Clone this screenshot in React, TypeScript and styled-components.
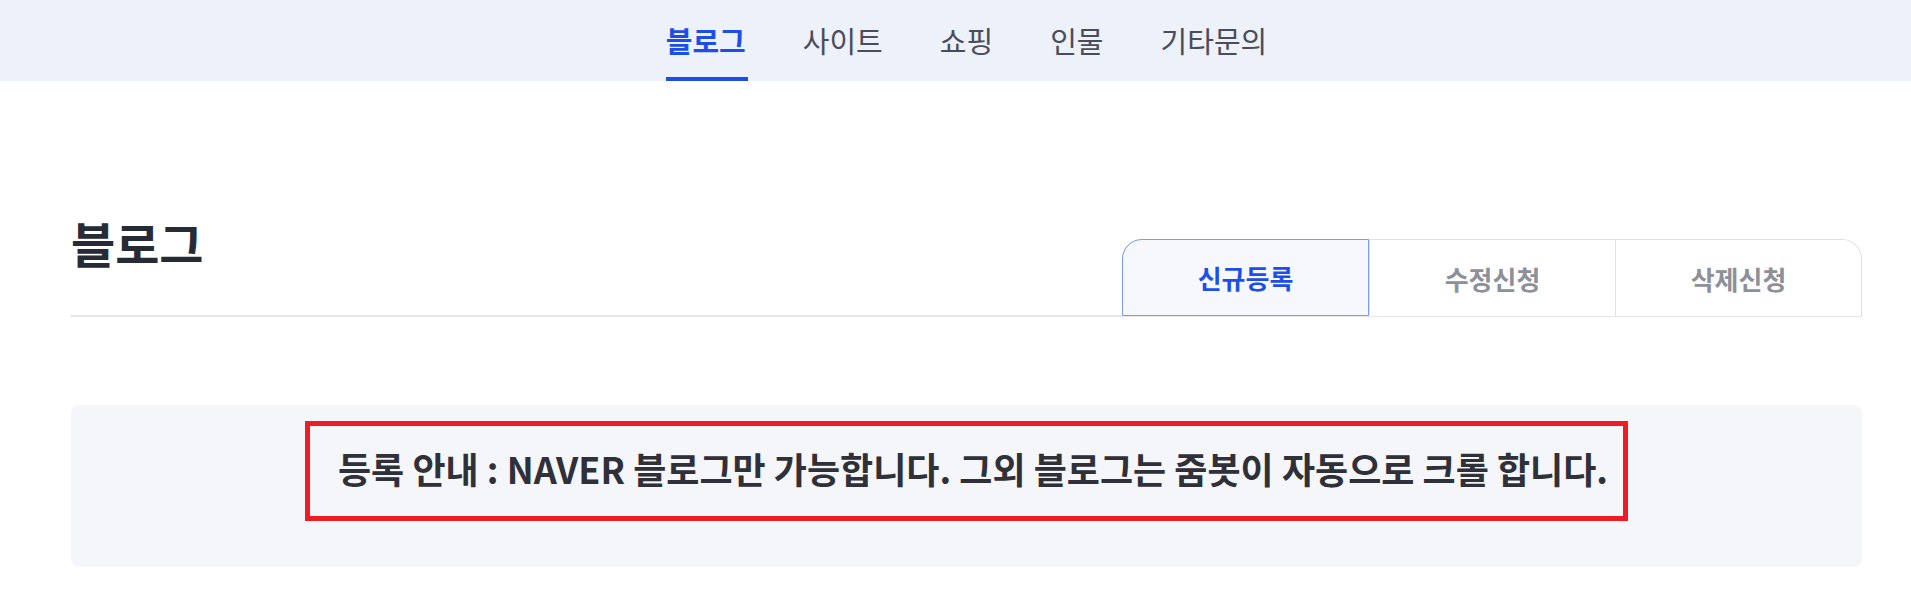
import React from "react";
import styled, { createGlobalStyle } from "styled-components";

const Global = createGlobalStyle`
  * { box-sizing: border-box; }
  html, body { margin: 0; padding: 0; background: #ffffff; }
  body { font-family: "Noto Sans CJK KR", "Noto Sans", sans-serif; color: #262b36; }
`;

const Header = styled.header`
  height: 81px;
  background: #edf1f9;
  padding: 0 49px 0 71px;
  display: flex;
  justify-content: center;
`;

const Nav = styled.nav`
  display: flex;
  gap: 57px;
  height: 100%;
`;

const NavItem = styled.a<{ $active?: boolean }>`
  position: relative;
  display: flex;
  align-items: center;
  height: 100%;
  padding-bottom: 2px;
  font-size: 29px;
  font-weight: ${(p) => (p.$active ? 700 : 400)};
  color: ${(p) => (p.$active ? "#1d4fe8" : "#4b4c5a")};
  text-decoration: none;
  cursor: pointer;
  &::after {
    content: "";
    position: absolute;
    left: 0;
    right: -2px;
    bottom: 0;
    height: 4px;
    background: ${(p) => (p.$active ? "#1d4fe8" : "transparent")};
  }
`;

const Main = styled.main`
  padding: 0 49px 0 71px;
`;

const TitleRow = styled.div`
  margin-top: 137px;
  display: flex;
  justify-content: space-between;
  align-items: flex-start;
  border-bottom: 2px solid #e6e7ed;
`;

const Title = styled.h1`
  margin: 0;
  font-size: 48px;
  line-height: 1;
  font-weight: 700;
  color: #262b36;
`;

const Tabs = styled.div`
  margin-top: 21px;
  margin-bottom: -1px;
  display: flex;
  height: 77px;
  border: 1px solid #dde1ee;
  border-bottom: none;
  border-radius: 20px 20px 0 0;
`;

const Tab = styled.button<{ $active?: boolean; $pos: "first" | "mid" | "last" }>`
  margin: ${(p) => (p.$active ? "-1px 0 0 -1px" : "0")};
  height: ${(p) => (p.$active ? "77px" : "76px")};
  width: ${(p) => (p.$active ? "247px" : "246px")};
  border: ${(p) => (p.$active ? "1px solid #7a9bf0" : "none")};
  border-left: ${(p) =>
    p.$active ? "1px solid #7a9bf0" : p.$pos === "first" ? "none" : "1px solid #dde1ee"};
  border-radius: ${(p) =>
    p.$pos === "first" ? "20px 0 0 0" : p.$pos === "last" ? "0 20px 0 0" : "0"};
  background: ${(p) => (p.$active ? "#f7f8fe" : "#ffffff")};
  font-family: inherit;
  font-size: 26px;
  font-weight: 700;
  color: ${(p) => (p.$active ? "#1d4fe8" : "#8e9099")};
  display: flex;
  align-items: center;
  justify-content: center;
  cursor: pointer;
  padding: 0;
`;

const InfoBox = styled.section`
  margin-top: 88px;
  background: #f5f6fa;
  border-radius: 8px;
  padding: 16px 0 46px;
  display: flex;
  justify-content: center;
`;

const Frame = styled.div`
  height: 100px;
  border: 5px solid #ee1c25;
  padding: 0 15px 6px 28px;
  display: flex;
  align-items: center;
`;

const Notice = styled.p`
  margin: 0;
  font-size: 36px;
  font-weight: 700;
  color: #2f3038;
  white-space: nowrap;
`;

const navItems = ["블로그", "사이트", "쇼핑", "인물", "기타문의"];
const tabs = ["신규등록", "수정신청", "삭제신청"];

export default function App() {
  return (
    <>
      <Global />
      <Header>
        <Nav>
          {navItems.map((n, i) => (
            <NavItem key={n} $active={i === 0}>
              {n}
            </NavItem>
          ))}
        </Nav>
      </Header>
      <Main>
        <TitleRow>
          <Title>블로그</Title>
          <Tabs>
            {tabs.map((t, i) => (
              <Tab
                key={t}
                $active={i === 0}
                $pos={i === 0 ? "first" : i === tabs.length - 1 ? "last" : "mid"}
              >
                {t}
              </Tab>
            ))}
          </Tabs>
        </TitleRow>
        <InfoBox>
          <Frame>
            <Notice>등록 안내 : NAVER 블로그만 가능합니다. 그외 블로그는 줌봇이 자동으로 크롤 합니다.</Notice>
          </Frame>
        </InfoBox>
      </Main>
    </>
  );
}
